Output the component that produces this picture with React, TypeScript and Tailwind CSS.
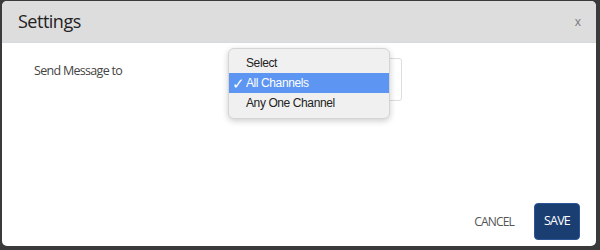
import React from "react";

export default function App() {
  return (
    <div className="w-[600px] h-[250px] bg-[#3a3a3a] pl-[2px] pt-[1px] pr-[4px] pb-[4px]" style={{ fontFamily: "'Open Sans', sans-serif" }}>
      <div className="relative w-full h-full bg-white rounded-[5px] overflow-hidden flex flex-col">
        <div className="h-[42px] bg-[#dddddd] border-b border-[#d3dbe0] flex items-center justify-between pl-[16px] pr-[15px]">
          <span className="text-[18px] text-[#222] tracking-[-0.5px]">Settings</span>
          <span className="text-[12px] text-[#777]">x</span>
        </div>
        <div className="flex-1 flex items-start pt-[19px] pl-[32px]">
          <span className="w-[196px] text-[12.5px] text-[#444] tracking-[-0.7px]">Send Message to</span>
          <div className="mt-[-4px] w-[172px] h-[43px] border border-[#ddd] rounded-[3px]" />
        </div>
        <div className="flex items-center justify-end pr-[16px] pb-[6px] gap-[20px]">
          <span className="text-[12px] text-[#555] tracking-[-0.8px]">CANCEL</span>
          <div className="w-[46px] h-[37px] bg-[#1b3e72] rounded-[4px] border border-[#2b5594] flex items-center justify-center">
            <span className="text-[12.5px] text-white tracking-[-0.8px]">SAVE</span>
          </div>
        </div>
        <div className="absolute left-[226px] top-[47px] w-[162px] h-[71px] bg-[#f0f0f0] rounded-[6px] border border-[#d5d5d5] shadow-[0_2px_6px_rgba(0,0,0,0.2)] py-[4px] flex flex-col" style={{ fontFamily: "'Liberation Sans', sans-serif" }}>
          <div className="h-[20px] flex items-center pl-[17px] text-[12px] text-[#222] tracking-[-0.4px]">Select</div>
          <div className="h-[20px] flex items-center bg-[#5c95f2] text-white text-[12px] tracking-[-0.4px]">
            <span className="w-[17px] pl-[3px] text-[15px] leading-none">✓</span>
            <span>All Channels</span>
          </div>
          <div className="h-[20px] flex items-center pl-[17px] text-[12px] text-[#222] tracking-[-0.4px]">Any One Channel</div>
        </div>
      </div>
    </div>
  );
}
